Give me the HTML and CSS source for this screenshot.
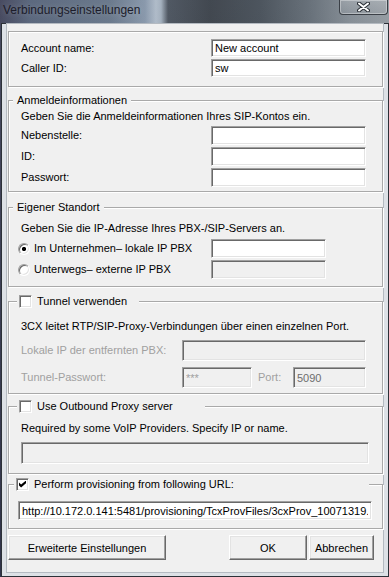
FILE: index.html
```html
<!DOCTYPE html>
<html lang="de">
<head>
    <meta http-equiv="content-type" content="text/html; charset=utf-8" />
    <title>Verbindungseinstellungen</title>
    <link rel="stylesheet" href="styles.css">
</head>

<body>
<div class="window">
    <div class="titlebar">
        <span class="title">Verbindungseinstellungen</span>
        <div class="close">
            <svg width="13" height="10" viewBox="0 0 13 10">
                <path d="M2 1.5 L11 8.5 M11 1.5 L2 8.5" stroke="#2a2f36" stroke-width="4" stroke-linecap="round" />
                <path d="M2 1.5 L11 8.5 M11 1.5 L2 8.5" stroke="#fff" stroke-width="2" stroke-linecap="round" />
            </svg>
        </div>
    </div>

    <div class="frame">
        <form class="client">
            <fieldset class="group g-account">
                <div class="row"><label for="acc">Account name:</label><input id="acc" class="text" value="New account"></div>
                <div class="row"><label for="cid">Caller ID:</label><input id="cid" class="text" value="sw"></div>
            </fieldset>

            <fieldset class="group g-login">
                <legend>Anmeldeinformationen</legend>
                <p class="hint">Geben Sie die Anmeldeinformationen Ihres SIP-Kontos ein.</p>
                <div class="row"><label for="ext">Nebenstelle:</label><input id="ext" class="text"></div>
                <div class="row"><label for="uid">ID:</label><input id="uid" class="text"></div>
                <div class="row"><label for="pwd">Passwort:</label><input id="pwd" class="text" type="password"></div>
            </fieldset>

            <fieldset class="group g-place">
                <legend>Eigener Standort</legend>
                <p class="hint">Geben Sie die IP-Adresse Ihres PBX-/SIP-Servers an.</p>
                <div class="row">
                    <label class="option"><input type="radio" name="loc" class="radio" checked>Im Unternehmen– lokale IP PBX</label>
                    <input class="text short">
                </div>
                <div class="row">
                    <label class="option"><input type="radio" name="loc" class="radio">Unterwegs– externe IP PBX</label>
                    <input class="text short" disabled>
                </div>
            </fieldset>

            <fieldset class="group g-tunnel">
                <legend class="check-legend"><label><input type="checkbox" class="check">Tunnel verwenden</label></legend>
                <p class="hint">3CX leitet RTP/SIP-Proxy-Verbindungen über einen einzelnen Port.</p>
                <div class="row">
                    <label class="off">Lokale IP der entfernten PBX:</label>
                    <input class="text" disabled>
                </div>
                <div class="row">
                    <label class="off">Tunnel-Passwort:</label>
                    <div class="pair">
                        <input class="text pass" value="***" disabled>
                        <label class="off port-label">Port:</label>
                        <input class="text port" value="5090" disabled>
                    </div>
                </div>
            </fieldset>

            <fieldset class="group g-proxy">
                <legend class="check-legend"><label><input type="checkbox" class="check">Use Outbound Proxy server</label></legend>
                <p class="hint">Required by some VoIP Providers. Specify IP or name.</p>
                <input class="text full" disabled>
            </fieldset>

            <fieldset class="group g-prov">
                <legend class="check-legend"><label><input type="checkbox" class="check" checked>Perform provisioning from following URL:</label></legend>
                <input class="text full" value="http://10.172.0.141:5481/provisioning/TcxProvFiles/3cxProv_10071319.xml">
            </fieldset>

            <div class="buttons">
                <button type="button" class="btn btn-adv">Erweiterte Einstellungen</button>
                <button type="button" class="btn btn-ok">OK</button>
                <button type="button" class="btn btn-cancel">Abbrechen</button>
            </div>
        </form>
    </div>
</div>
</body>
</html>
```

FILE: styles.css
```css
html, body {
    margin: 0;
    overflow: hidden;
}
body {
    font-family: "Liberation Sans", Arial, sans-serif;
    font-size: 11px;
    color: #000;
}

.window {
    width: 389px;
    height: 577px;
    display: flex;
    flex-direction: column;
    background:
        linear-gradient(180deg, rgba(255,255,255,0.10), rgba(0,0,0,0.08)),
        linear-gradient(90deg, #34374f 0, #4a5870 30px, #5b6b80 110px, #7d8ea3 145px,
            #a7b4c3 156px, #9aa8b7 161px, #3d4652 168px, #2d343d 210px, #39424c 260px,
            #58626c 310px, #7a838c 350px, #8a9299 389px);
}

/* title bar */
.titlebar {
    height: 23px;
    flex: none;
    display: flex;
    justify-content: space-between;
    align-items: flex-start;
}
.title {
    margin: 3px 0 0 3px;
    font-size: 12px;
    line-height: 14px;
    color: #1c1c2a;
    text-shadow: 0 0 6px rgba(255,255,255,0.25);
}
.close {
    width: 47px;
    height: 14px;
    margin-right: 1px;
    border: 1px solid #3b4047;
    border-top: none;
    border-radius: 0 0 4px 4px;
    box-shadow: inset 0 0 0 1px rgba(255,255,255,0.35);
    background: linear-gradient(180deg, rgba(255,255,255,0.18), rgba(255,255,255,0.05));
    display: flex;
    justify-content: center;
    align-items: center;
}

/* frame and client area */
.frame {
    flex: 1;
    display: flex;
    margin-left: 1px;
    padding: 0 5px 4px 5px;
    border: 1px solid #2c3138;
    background: #dde1e6;
}
.client {
    flex: 1;
    margin: 0;
    padding: 7px 9px 0 1px;
    background: #f0f0f0;
    box-shadow: 0 0 0 1px #b4bac1;
}

/* group boxes */
.group {
    margin: 0 -9px 0 0;
    padding: 0 15px 0 12px;
    border: 1px solid #a9a9a9;
    box-shadow: inset 1px 1px 0 #fff, 1px 1px 0 #fff;
    min-width: 0;
}
.group legend {
    margin-left: -8px;
    padding: 0 4px;
    height: 14px;
    line-height: 14px;
    background: #f0f0f0;
}
.group .check-legend {
    margin-left: -4px;
    padding: 0 0 0 2px;
}
.check-legend label {
    display: flex;
    align-items: center;
}

.hint {
    margin: 0;
    line-height: 13px;
}

.row {
    display: grid;
    grid-template-columns: 190px auto;
    align-items: center;
    justify-items: start;
}
.row label {
    line-height: 13px;
}

.g-account {
    padding-top: 7px;
    padding-bottom: 9px;
}
.g-account .row {
    height: 18px;
    margin-bottom: 2px;
}
.g-account .row:last-child {
    margin-bottom: 0;
}

.g-login {
    margin-top: 6px;
    padding-top: 3px;
    padding-bottom: 4px;
}
.g-login .row {
    height: 19px;
    margin-top: 2px;
}
.g-login .hint {
    margin-bottom: 3px;
}

.g-place {
    margin-top: 8px;
    padding-top: 8px;
    padding-bottom: 7px;
}
.g-place .row {
    height: 19px;
    margin-top: 2px;
}
.g-place .hint {
    margin-bottom: 4px;
}

.g-tunnel {
    margin-top: 7px;
    padding-top: 12px;
    padding-bottom: 5px;
}
.g-tunnel legend {
    width: 120px;
}
.g-tunnel .row {
    grid-template-columns: 161px auto;
    height: 21px;
    margin-top: 6px;
}
.g-tunnel .hint {
    margin-bottom: 7px;
}

.g-proxy {
    margin-top: 5px;
    padding: 9px 13px 9px 12px;
}
.g-proxy legend {
    width: 186px;
}
.g-proxy .hint {
    margin-bottom: 7px;
}

.g-prov {
    margin-top: 3px;
    padding: 10px 10px 8px 9px;
}
.g-prov legend {
    width: 353px;
}

.option {
    display: flex;
    align-items: center;
    margin-left: -3px;
}
.off {
    color: #a0a0a0;
}

/* text boxes */
.text {
    box-sizing: border-box;
    width: 155px;
    height: 100%;
    margin: 0;
    padding: 0 3px;
    font: inherit;
    color: #000;
    background: #fff;
    border: 1px solid;
    border-color: #a0a0a0 #fff #fff #a0a0a0;
    box-shadow: inset 1px 1px 0 #696969, inset -1px -1px 0 #e3e3e3;
    outline: none;
}
.text:disabled {
    background: #f0f0f0;
    color: #6d6d6d;
}
.text.short {
    width: 115px;
}
.g-tunnel .text {
    width: 184px;
}
.pair {
    display: flex;
    align-items: center;
    height: 100%;
}
.g-tunnel .text.pass {
    width: 70px;
    color: #a0a0a0;
}
.port-label {
    width: 35px;
    margin-left: 6px;
}
.g-tunnel .text.port {
    width: 73px;
}
.text.full {
    display: block;
    width: 100%;
    height: 22px;
}
.g-prov .text.full {
    height: 19px;
}

/* check boxes and radio buttons */
.check {
    appearance: none;
    position: relative;
    flex: none;
    width: 13px;
    height: 13px;
    margin: 0 5px 0 0;
    background: #fff;
    border: 1px solid;
    border-color: #a0a0a0 #fff #fff #a0a0a0;
    box-shadow: inset 1px 1px 0 #696969, inset -1px -1px 0 #e3e3e3;
}
.check:checked::after {
    content: "";
    position: absolute;
    left: 2px;
    top: 2px;
    width: 7px;
    height: 7px;
    background: #000;
    clip-path: polygon(0 30%, 30% 58%, 100% 0, 100% 40%, 30% 100%, 0 70%);
}
.radio {
    appearance: none;
    flex: none;
    width: 12px;
    height: 12px;
    margin: 0 4px 0 0;
    border-radius: 50%;
    border: 1px solid;
    border-color: #a0a0a0 #fff #fff #a0a0a0;
    box-shadow: inset 1px 1px 0 #696969, inset -1px -1px 0 #e3e3e3;
    background: #fff;
}
.radio:checked {
    background: radial-gradient(circle, #000 0, #000 1.8px, #fff 2.4px);
}

/* buttons */
.buttons {
    display: flex;
    margin-top: 6px;
}
.btn {
    height: 25px;
    margin: 0;
    padding: 0;
    font: inherit;
    color: #000;
    background: #f0f0f0;
    border: 1px solid;
    border-color: #fff #696969 #696969 #fff;
    box-shadow: inset -1px -1px 0 #a0a0a0, inset 1px 1px 0 #e3e3e3;
}
.btn-adv {
    width: 158px;
}
.btn-ok {
    width: 78px;
    margin-left: auto;
}
.btn-cancel {
    width: 65px;
    margin-left: 2px;
}
```
